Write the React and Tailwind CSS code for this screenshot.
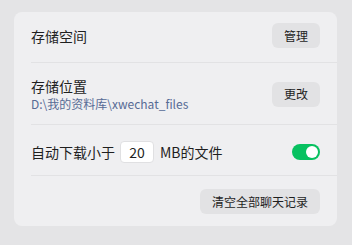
import React from 'react';

const font = { fontFamily: '"Noto Sans CJK SC", "Noto Sans", sans-serif' };

const Button = ({ children, className = '' }) => (
  <button className={`h-[25px] rounded-[6px] bg-[#e2e2e4] text-[12px] text-[#1f1f1f] leading-none ${className}`}>
    {children}
  </button>
);

const Toggle = () => (
  <div className="w-[28px] h-[16px] rounded-full bg-[#07c160] flex items-center justify-end pr-[2px]">
    <div className="w-[12px] h-[12px] rounded-full bg-white" />
  </div>
);

export default function App() {
  return (
    <div className="w-[352px] h-[245px] bg-[#e4e4e6] pt-[12px] pl-[14px]" style={font}>
      <div className="w-[323px] h-[214px] rounded-[8px] bg-[#efeff1] pl-[17px] text-[#1f1f1f]">
        <div className="flex items-center justify-between pr-[17px] pt-[11px] pb-[14px] border-b border-[#e2e2e4]">
          <span className="text-[14px] leading-[20px]">存储空间</span>
          <Button className="w-[48px]">管理</Button>
        </div>

        <div className="flex items-center justify-between pr-[17px] pt-[13px] pb-[12px] border-b border-[#e2e2e4]">
          <div className="flex flex-col">
            <span className="text-[14px] leading-[20px]">存储位置</span>
            <span className="text-[12px] leading-[16px] text-[#576b95]">D:\我的资料库\xwechat_files</span>
          </div>
          <Button className="w-[48px]">更改</Button>
        </div>

        <div className="flex items-center justify-between pr-[17px] pt-[16px] pb-[12px] border-b border-[#e2e2e4]">
          <div className="flex items-center text-[14px] leading-[20px]">
            <span>自动下载小于</span>
            <div className="ml-[5px] mr-[6px] w-[34px] h-[22px] rounded-[4px] bg-white border border-[#e0e0e2] flex items-center justify-center">
              20
            </div>
            <span>MB的文件</span>
          </div>
          <Toggle />
        </div>

        <div className="flex justify-end pr-[17px] pt-[13px]">
          <Button className="w-[120px]">清空全部聊天记录</Button>
        </div>
      </div>
    </div>
  );
}
